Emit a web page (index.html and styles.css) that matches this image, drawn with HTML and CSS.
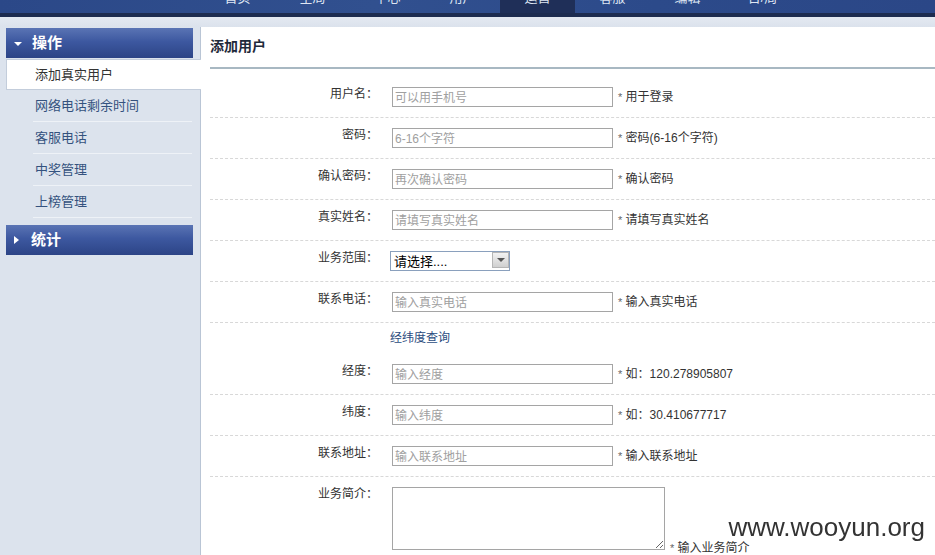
FILE: index.html
```html
<!DOCTYPE html>
<html lang="zh-CN">
<head>
<meta charset="utf-8">
<title>添加用户</title>
<link rel="stylesheet" href="styles.css">
</head>
<body>
<div class="topbar">
  <ul class="nav">
    <li><span>首页</span></li>
    <li><span>全局</span></li>
    <li><span>中心</span></li>
    <li><span>用户</span></li>
    <li class="on"><span>运营</span></li>
    <li><span>客服</span></li>
    <li><span>编辑</span></li>
    <li><span>日/周</span></li>
  </ul>
</div>
<div class="strip"></div>
<div class="main">
  <aside class="side">
    <div class="side-head"><span class="tri-down"></span>操作</div>
    <ul class="side-list">
      <li class="active">添加真实用户</li>
      <li>网络电话剩余时间</li>
      <li>客服电话</li>
      <li>中奖管理</li>
      <li>上榜管理</li>
    </ul>
    <div class="side-head closed"><span class="tri-right"></span>统计</div>
  </aside>
  <section class="content">
    <h2 class="title">添加用户</h2>
    <form class="form">
      <div class="row">
        <label class="lbl">用户名：</label>
        <div class="field"><input class="txt" type="text" placeholder="可以用手机号"><span class="hint"><i>*</i> 用于登录</span></div>
      </div>
      <div class="row">
        <label class="lbl">密码：</label>
        <div class="field"><input class="txt" type="text" placeholder="6-16个字符"><span class="hint"><i>*</i> 密码(6-16个字符)</span></div>
      </div>
      <div class="row">
        <label class="lbl">确认密码：</label>
        <div class="field"><input class="txt" type="text" placeholder="再次确认密码"><span class="hint"><i>*</i> 确认密码</span></div>
      </div>
      <div class="row">
        <label class="lbl">真实姓名：</label>
        <div class="field"><input class="txt" type="text" placeholder="请填写真实姓名"><span class="hint"><i>*</i> 请填写真实姓名</span></div>
      </div>
      <div class="row">
        <label class="lbl">业务范围：</label>
        <div class="field sel-field">
          <span class="sel-wrap">
            <select class="sel"><option>请选择....</option></select>
            <span class="sel-btn"><span class="sel-arrow"></span></span>
          </span>
        </div>
      </div>
      <div class="row">
        <label class="lbl">联系电话：</label>
        <div class="field"><input class="txt" type="text" placeholder="输入真实电话"><span class="hint"><i>*</i> 输入真实电话</span></div>
      </div>
      <div class="linkrow"><a class="lnk" href="#">经纬度查询</a></div>
      <div class="row">
        <label class="lbl">经度：</label>
        <div class="field"><input class="txt" type="text" placeholder="输入经度"><span class="hint"><i>*</i> 如：120.278905807</span></div>
      </div>
      <div class="row">
        <label class="lbl">纬度：</label>
        <div class="field"><input class="txt" type="text" placeholder="输入纬度"><span class="hint"><i>*</i> 如：30.410677717</span></div>
      </div>
      <div class="row">
        <label class="lbl">联系地址：</label>
        <div class="field"><input class="txt" type="text" placeholder="输入联系地址"><span class="hint"><i>*</i> 输入联系地址</span></div>
      </div>
      <div class="row last">
        <label class="lbl">业务简介：</label>
        <div class="field area-field"><textarea class="area"></textarea><span class="hint low"><i>*</i> 输入业务简介</span></div>
      </div>
    </form>
  </section>
</div>
<div class="watermark">www.wooyun.org</div>
</body>
</html>
```

FILE: styles.css
```css
html, body {
  margin: 0;
  padding: 0;
  height: 100%;
  overflow: hidden;
}
body {
  font-family: "Liberation Sans", "Noto Sans CJK SC", sans-serif;
  font-size: 12px;
  color: #333;
  background: #dfe5ef;
}
.topbar {
  height: 13px;
  background: linear-gradient(90deg, #2b4888 0%, #31508f 40%, #2c4a8a 70%, #2b4787 100%);
  border-bottom: 4px solid #1d2c50;
  overflow: hidden;
}
.nav {
  list-style: none;
  margin: 0;
  padding: 0 0 0 200px;
  display: flex;
}
.nav li {
  width: 75px;
  height: 13px;
  text-align: center;
  color: #dfe6f3;
  font-size: 13px;
  overflow: hidden;
}
.nav li span {
  display: block;
  line-height: 16px;
  margin-top: -10px;
}
.nav li.on {
  background: #1f2f58;
}
.strip {
  height: 10px;
  background: linear-gradient(#e4e9f1, #dbe2ec);
}
.main {
  display: flex;
  height: 528px;
}
.side {
  width: 200px;
  flex: none;
  background: #dce3ed;
  padding-top: 1px;
}
.side-head {
  margin: 0 7px 0 6px;
  height: 30px;
  line-height: 30px;
  background: linear-gradient(#5a74b4 0%, #3d58a0 45%, #2c4486 100%);
  color: #fff;
  font-weight: bold;
  font-size: 15px;
  display: flex;
  align-items: center;
  padding-left: 6px;
}
.side-head.closed {
  margin-top: 7px;
}
.tri-down {
  width: 0;
  height: 0;
  border-left: 4px solid transparent;
  border-right: 4px solid transparent;
  border-top: 4px solid #fff;
  margin: 2px 10px 0 2px;
}
.tri-right {
  width: 0;
  height: 0;
  border-top: 4px solid transparent;
  border-bottom: 4px solid transparent;
  border-left: 5px solid #fff;
  margin: 0 12px 0 2px;
}
.side-list {
  list-style: none;
  margin: 0;
  padding: 0;
}
.side-list li {
  height: 31px;
  line-height: 31px;
  margin: 0 8px 0 33px;
  padding-left: 2px;
  border-bottom: 1px solid #eef2f7;
  color: #34527e;
  font-size: 13px;
}
.side-list li.active {
  position: relative;
  z-index: 1;
  height: 29px;
  line-height: 29px;
  margin: 1px -1px 0 6px;
  padding-left: 28px;
  background: #fff;
  border: 1px solid #c3cddb;
  border-right: none;
  color: #333;
}
.content {
  flex: 1;
  background: #fff;
  border-left: 1px solid #b9c5d5;
  padding-left: 9px;
}
.title {
  margin: 0;
  height: 40px;
  line-height: 39px;
  font-size: 14px;
  font-weight: bold;
  color: #1f2a3a;
  border-bottom: 2px solid #a8b8c2;
}
.form {
  margin-top: 8px;
}
.row {
  display: flex;
  align-items: flex-start;
  height: 30px;
  padding-top: 10px;
  border-bottom: 1px dashed #d8d8d8;
}
.row.last {
  border-bottom: none;
  height: auto;
}
.lbl {
  width: 168px;
  flex: none;
  text-align: right;
  line-height: 15px;
  color: #333;
}
.field {
  margin-left: 14px;
  display: flex;
  align-items: center;
}
.txt {
  box-sizing: border-box;
  width: 221px;
  height: 20px;
  border: 1px solid #a5a5a5;
  padding: 2px 2px 0;
  font-family: "Liberation Sans", "Noto Sans CJK SC", sans-serif;
  font-size: 12px;
  color: #333;
  outline: none;
}
.txt::placeholder {
  color: #a0a0a0;
}
.hint {
  margin-left: 5px;
  margin-bottom: 3px;
  color: #333;
  white-space: nowrap;
}
.hint i {
  font-style: normal;
  color: #666;
  font-size: 11px;
}
.sel-field {
  margin-left: 12px;
}
.sel-wrap {
  position: relative;
  display: inline-block;
}
.sel {
  box-sizing: border-box;
  width: 120px;
  height: 20px;
  appearance: none;
  -webkit-appearance: none;
  border: 1px solid #8aa0bd;
  border-radius: 0;
  background: #fff;
  padding: 0 3px;
  font-family: "Liberation Sans", "Noto Sans CJK SC", sans-serif;
  font-size: 13px;
  color: #000;
  outline: none;
}
.sel-btn {
  position: absolute;
  right: 1px;
  top: 1px;
  width: 17px;
  height: 16px;
  box-sizing: border-box;
  border: 1px solid #b5b5b5;
  background: linear-gradient(#f2f2f2, #cfcfcf);
  display: flex;
  align-items: center;
  justify-content: center;
}
.sel-arrow {
  width: 0;
  height: 0;
  border-left: 4px solid transparent;
  border-right: 4px solid transparent;
  border-top: 4px solid #555;
}
.linkrow {
  height: 31px;
  padding-left: 180px;
  box-sizing: border-box;
  padding-top: 7px;
  line-height: 16px;
}
.lnk {
  color: #2b4c7e;
  text-decoration: none;
}
.area-field {
  align-items: flex-end;
}
.area {
  box-sizing: border-box;
  width: 273px;
  height: 63px;
  border: 1px solid #a5a5a5;
  margin: 0;
  outline: none;
}
.hint.low {
  line-height: 16px;
  margin-bottom: -6px;
}
.watermark {
  position: fixed;
  right: 10px;
  bottom: 13px;
  font-family: "Liberation Sans", sans-serif;
  font-size: 26px;
  line-height: 30px;
  color: #333;
}
```
